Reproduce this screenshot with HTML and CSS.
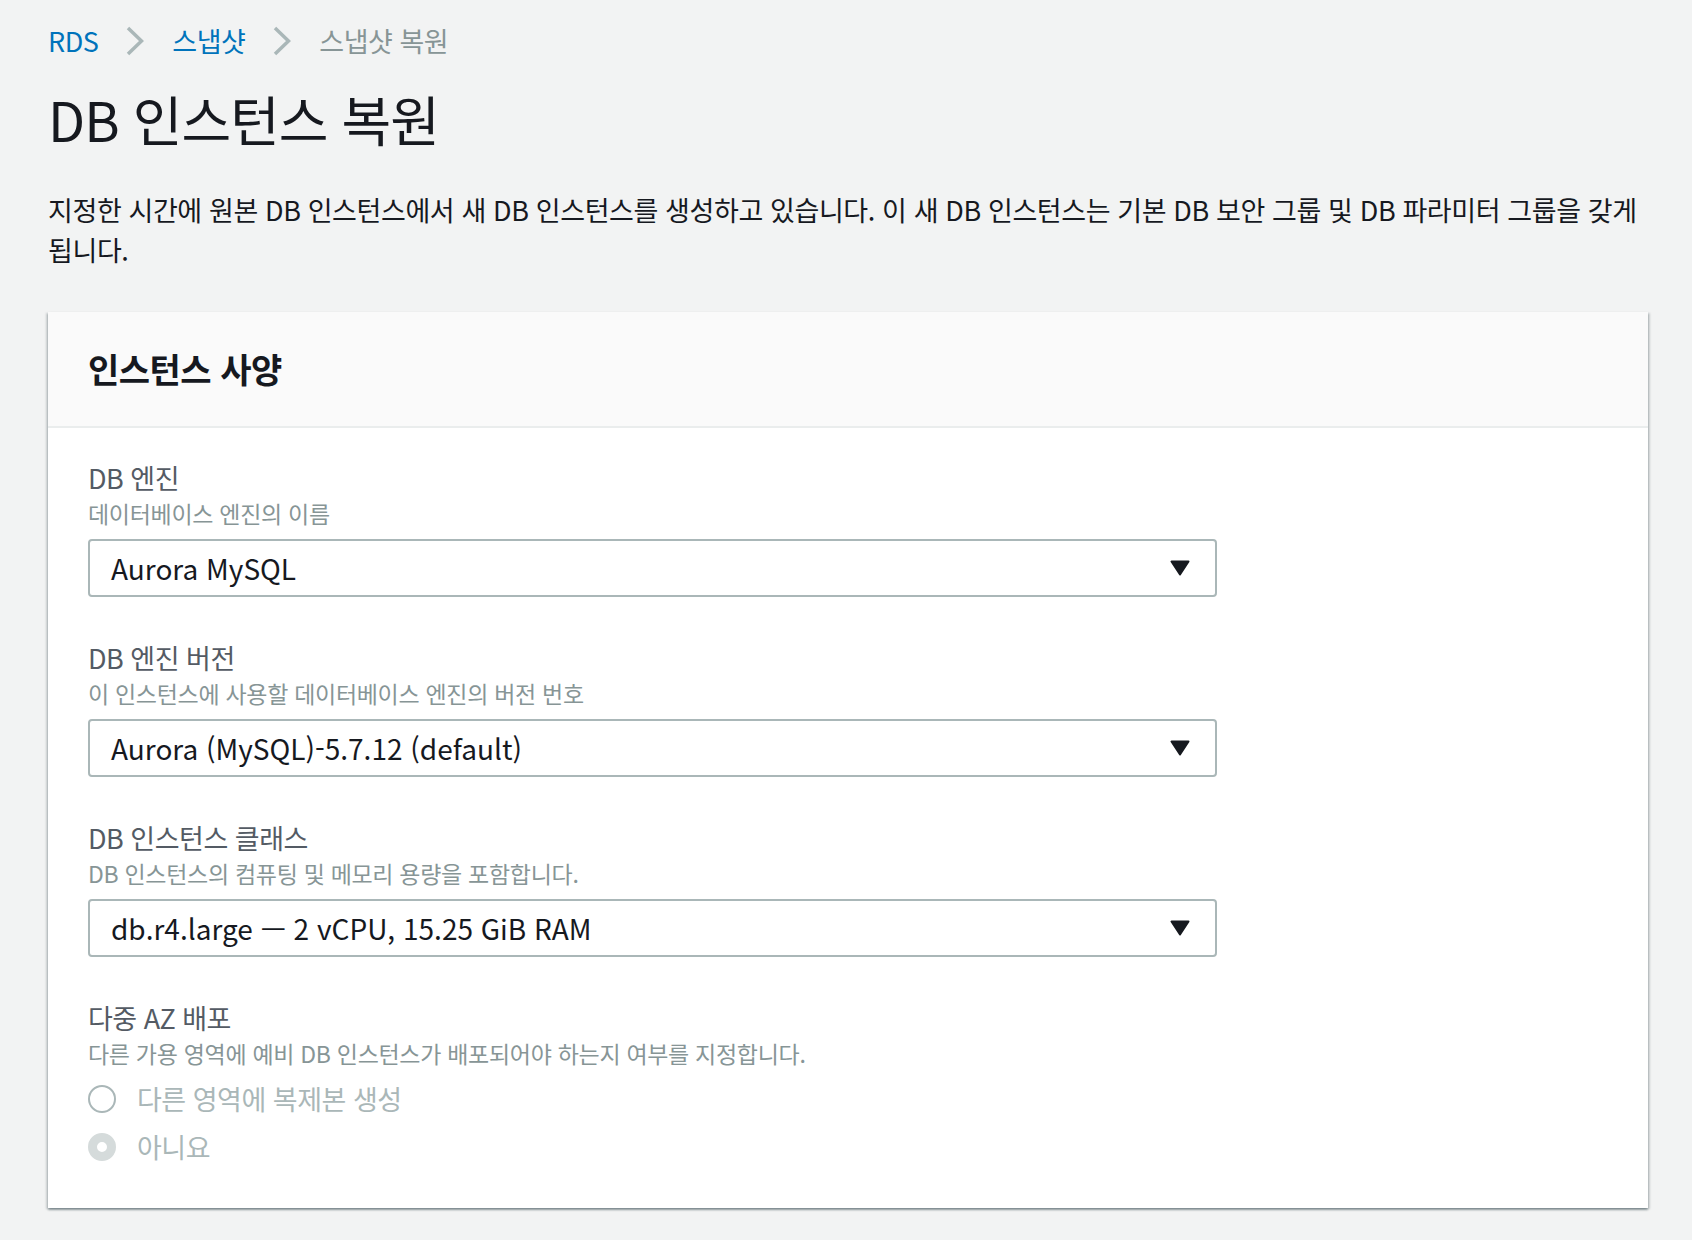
FILE: index.html
```html
<!DOCTYPE html>
<html lang="ko">
<head>
<meta charset="utf-8">
<title>DB 인스턴스 복원</title>
<link rel="stylesheet" href="styles.css">
</head>
<body>
<div class="page">
  <nav class="breadcrumb">
    <a class="crumb link" href="#">RDS</a>
    <svg class="chev" viewBox="0 0 18 30" width="18" height="30"><polyline points="2,2 15.5,15 2,28" fill="none" stroke="#aab7b8" stroke-width="3.5"/></svg>
    <a class="crumb link" href="#">스냅샷</a>
    <svg class="chev" viewBox="0 0 18 30" width="18" height="30"><polyline points="2,2 15.5,15 2,28" fill="none" stroke="#aab7b8" stroke-width="3.5"/></svg>
    <span class="crumb current">스냅샷 복원</span>
  </nav>
  <h1 class="title">DB 인스턴스 복원</h1>
  <p class="intro">지정한 시간에 원본 DB 인스턴스에서 새 DB 인스턴스를 생성하고 있습니다. 이 새 DB 인스턴스는 기본 DB 보안 그룹 및 DB 파라미터 그룹을 갖게 됩니다.</p>

  <section class="card">
    <header class="card-header">
      <h2 class="card-title">인스턴스 사양</h2>
    </header>
    <div class="card-body">
      <div class="field">
        <div class="label">DB 엔진</div>
        <div class="desc">데이터베이스 엔진의 이름</div>
        <div class="select">
          <span class="select-value">Aurora MySQL</span>
          <svg class="caret" viewBox="0 0 20 16" width="20" height="16"><path d="M1.5 1.5 H18.5 L10 14.5 Z" fill="#16191f" stroke="#16191f" stroke-width="2" stroke-linejoin="round"/></svg>
        </div>
      </div>
      <div class="field">
        <div class="label">DB 엔진 버전</div>
        <div class="desc">이 인스턴스에 사용할 데이터베이스 엔진의 버전 번호</div>
        <div class="select">
          <span class="select-value">Aurora (MySQL)-5.7.12 (default)</span>
          <svg class="caret" viewBox="0 0 20 16" width="20" height="16"><path d="M1.5 1.5 H18.5 L10 14.5 Z" fill="#16191f" stroke="#16191f" stroke-width="2" stroke-linejoin="round"/></svg>
        </div>
      </div>
      <div class="field">
        <div class="label">DB 인스턴스 클래스</div>
        <div class="desc">DB 인스턴스의 컴퓨팅 및 메모리 용량을 포함합니다.</div>
        <div class="select">
          <span class="select-value">db.r4.large — 2 vCPU, 15.25 GiB RAM</span>
          <svg class="caret" viewBox="0 0 20 16" width="20" height="16"><path d="M1.5 1.5 H18.5 L10 14.5 Z" fill="#16191f" stroke="#16191f" stroke-width="2" stroke-linejoin="round"/></svg>
        </div>
      </div>
      <div class="field last">
        <div class="label">다중 AZ 배포</div>
        <div class="desc">다른 가용 영역에 예비 DB 인스턴스가 배포되어야 하는지 여부를 지정합니다.</div>
        <div class="radios">
          <div class="radio-row">
            <span class="radio"></span>
            <span class="radio-label">다른 영역에 복제본 생성</span>
          </div>
          <div class="radio-row">
            <span class="radio checked"></span>
            <span class="radio-label">아니요</span>
          </div>
        </div>
      </div>
    </div>
  </section>
</div>
</body>
</html>
```

FILE: styles.css
```css
html, body {
  margin: 0;
  padding: 0;
  background: #f2f3f3;
}

body {
  font-family: "Noto Sans CJK KR", "Noto Sans", sans-serif;
  color: #16191f;
}

.page {
  padding: 21px 44px 40px 48px;
}

.breadcrumb {
  display: flex;
  align-items: center;
  gap: 28px;
  height: 40px;
  font-size: 27px;
  line-height: 40px;
}

.crumb {
  text-decoration: none;
  letter-spacing: -0.5px;
}

.crumb.link {
  color: #0073bb;
}

.crumb.current {
  color: #879596;
}

.chev {
  display: block;
}

.title {
  margin: 28px 0 0;
  font-size: 54px;
  line-height: 60px;
  font-weight: 400;
  letter-spacing: -1px;
  color: #16191f;
}

.intro {
  margin: 41px 0 0;
  font-size: 27px;
  line-height: 40px;
  letter-spacing: -0.4px;
  word-break: keep-all;
  color: #16191f;
}

.card {
  margin-top: 42px;
  background: #ffffff;
  box-shadow: 0 2px 2px 0 rgba(0, 28, 36, 0.35), 2px 1px 2px 0 rgba(0, 28, 36, 0.15), -2px 1px 2px 0 rgba(0, 28, 36, 0.15);
}

.card-header {
  background: #fafafa;
  border-bottom: 2px solid #eaeded;
  height: 114px;
  display: flex;
  align-items: center;
  padding: 0 40px;
}

.card-title {
  margin: 0;
  font-size: 34px;
  line-height: 40px;
  font-weight: 700;
  letter-spacing: -0.5px;
  color: #16191f;
}

.card-body {
  padding: 32px 40px 37px;
}

.field {
  margin-bottom: 43px;
}

.field.last {
  margin-bottom: 0;
}

.label {
  font-size: 27px;
  line-height: 36px;
  color: #545b64;
  letter-spacing: -0.5px;
}

.desc {
  font-size: 23px;
  line-height: 34px;
  color: #879596;
  letter-spacing: -0.3px;
}

.select {
  margin-top: 9px;
  width: 1129px;
  height: 58px;
  box-sizing: border-box;
  border: 2px solid #aab7b8;
  border-radius: 4px;
  display: flex;
  align-items: center;
  justify-content: space-between;
  padding: 0 25px 0 21px;
  background: #ffffff;
}

.select-value {
  font-size: 28px;
  line-height: 40px;
  color: #16191f;
}

.caret {
  display: block;
}

.radios {
  display: flex;
  flex-direction: column;
  padding-top: 5px;
}

.radio-row {
  display: flex;
  align-items: center;
  height: 48px;
  gap: 21px;
}

.radio {
  width: 28px;
  height: 28px;
  box-sizing: border-box;
  border-radius: 50%;
  border: 2px solid #aab7b8;
  background: #ffffff;
  flex: none;
}

.radio.checked {
  border: 9px solid #d5dbdb;
  background: #ffffff;
}

.radio-label {
  font-size: 27px;
  line-height: 40px;
  color: #aab7b8;
  letter-spacing: -0.5px;
}
```
